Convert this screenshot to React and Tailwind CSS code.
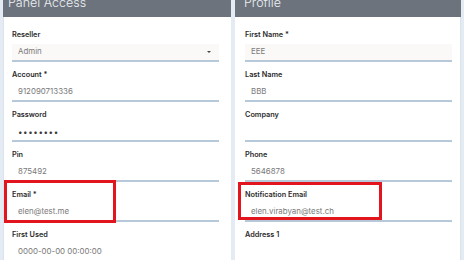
import React from "react";

const font = { fontFamily: "Inter, 'Noto Sans', sans-serif" };

function Field({ label, value, shaded, select, dots }) {
  return (
    <div className="flex flex-col mb-[8px]">
      <div className="h-[10px] leading-[10px] text-[7.3px] font-semibold text-[#2b2b2b]">{label}</div>
      <div
        className={`mt-[4px] h-[18px] border-b-2 border-[#b7c9d9] flex items-center pl-[6px] pr-[8px] text-[7.9px] text-[#7a7a7a] ${shaded ? "bg-[#fbf9f7]" : "bg-white"}`}
      >
        {dots ? (
          <span className="text-[#3a3a3a] tracking-[0.6px] text-[8px]">••••••••</span>
        ) : (
          <span className="flex-1">{value}</span>
        )}
        {select && (
          <span className="w-0 h-0 border-l-[2px] border-r-[2px] border-t-[2px] border-l-transparent border-r-transparent border-t-[#444]" />
        )}
      </div>
    </div>
  );
}

export default function App() {
  return (
    <div className="relative w-[464px] h-[260px] bg-[#e4ebf2] overflow-hidden flex pl-[3px]" style={font}>
      <div className="w-[228px] flex flex-col">
        <div className="h-[17px] shrink-0 bg-[#6c737d] overflow-hidden pl-[5px]">
          <div className="relative -top-[4px] text-[12.5px] font-light text-[#eef0f3] leading-[14px]">Panel Access</div>
        </div>
        <div className="flex-1 bg-white border-l border-[#dbe4ec] pl-[8px] pr-[12px] pt-[13px]">
          <Field label="Reseller" value="Admin" shaded select />
          <Field label="Account *" value="912090713336" />
          <Field label="Password" dots />
          <Field label="Pin" value="875492" />
          <Field label="Email *" value="elen@test.me" />
          <Field label="First Used" value="0000-00-00 00:00:00" />
        </div>
      </div>
      <div className="w-[4px]" />
      <div className="w-[226px] flex flex-col">
        <div className="h-[17px] shrink-0 bg-[#6c737d] overflow-hidden pl-[9px]">
          <div className="relative -top-[4px] text-[12.5px] font-light text-[#eef0f3] leading-[14px]">Profile</div>
        </div>
        <div className="flex-1 bg-white border-r border-[#dbe4ec] pl-[10px] pr-[8px] pt-[13px]">
          <Field label="First Name *" value="EEE" shaded />
          <Field label="Last Name" value="BBB" />
          <Field label="Company" value="" />
          <Field label="Phone" value="5646878" />
          <Field label="Notification Email" value="elen.virabyan@test.ch" />
          <Field label="Address 1" value="" />
        </div>
      </div>
      <div className="absolute left-[4px] top-[180px] w-[112px] h-[43px] border-[3px] border-[#e2141e]" />
      <div className="absolute left-[238px] top-[182px] w-[144px] h-[38px] border-[3px] border-[#e2141e]" />
    </div>
  );
}
